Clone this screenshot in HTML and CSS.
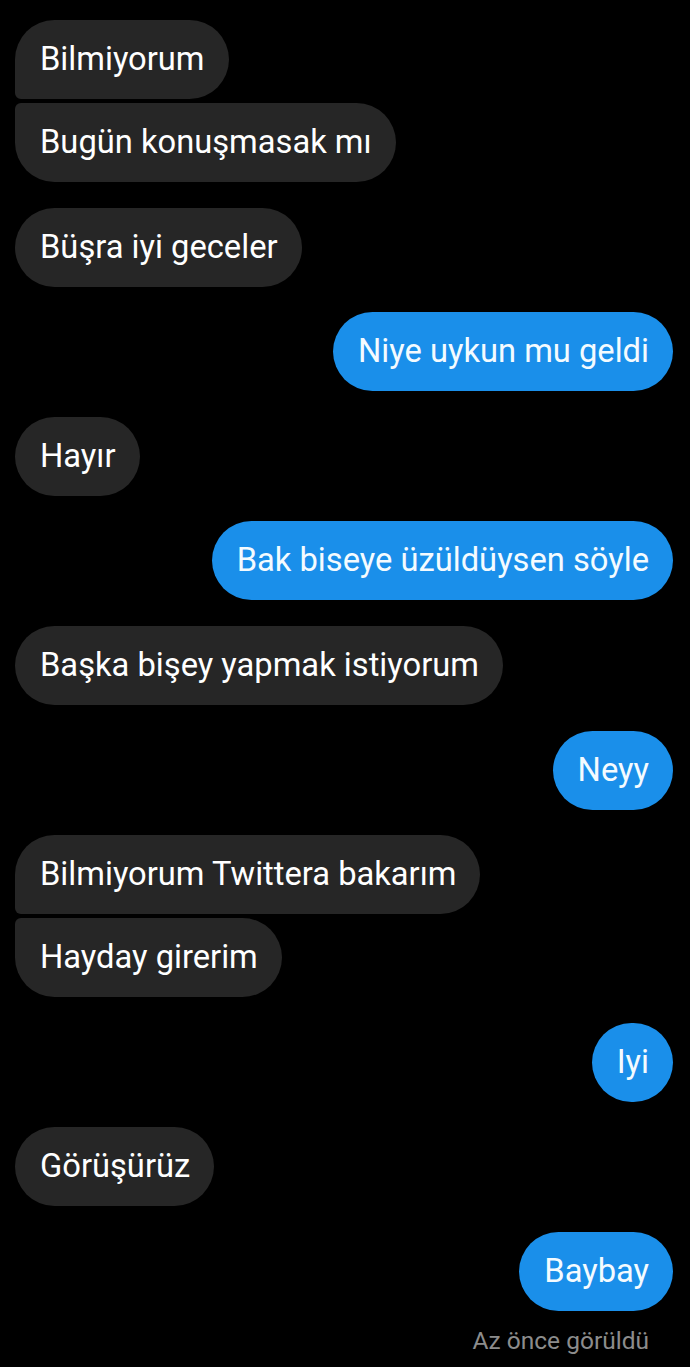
FILE: index.html
```html
<!DOCTYPE html>
<html lang="tr">
<head>
  <meta charset="UTF-8">
  <meta name="viewport" content="width=device-width, initial-scale=1.0">
  <title>Sohbet</title>
  <link rel="stylesheet" href="styles.css">
</head>
<body>
  <div class="chat">
    <!-- Incoming group -->
    <div class="group in">
      <div class="msg">Bilmiyorum</div>
      <div class="msg">Bugün konuşmasak mı</div>
    </div>
    <div class="group in">
      <div class="msg">Büşra iyi geceler</div>
    </div>
    <div class="group out">
      <div class="msg">Niye uykun mu geldi</div>
    </div>
    <div class="group in">
      <div class="msg">Hayır</div>
    </div>
    <div class="group out">
      <div class="msg">Bak biseye üzüldüysen söyle</div>
    </div>
    <div class="group in">
      <div class="msg">Başka bişey yapmak istiyorum</div>
    </div>
    <div class="group out">
      <div class="msg">Neyy</div>
    </div>
    <div class="group in">
      <div class="msg">Bilmiyorum Twittera bakarım</div>
      <div class="msg">Hayday girerim</div>
    </div>
    <div class="group out">
      <div class="msg">Iyi</div>
    </div>
    <div class="group in">
      <div class="msg">Görüşürüz</div>
    </div>
    <div class="group out">
      <div class="msg">Baybay</div>
    </div>
    <div class="seen">Az önce görüldü</div>
  </div>
</body>
</html>
```

FILE: styles.css
```css
/* General Styles */
body {
  margin: 0;
  padding: 0;
  background: #000;
  color: #fff;
  font-family: Roboto, "Noto Sans", Arial, sans-serif;
}

.chat {
  padding: 20px 17px 0 15px;
  display: flex;
  flex-direction: column;
  gap: 25.6px;
}

/* Message groups */
.group {
  display: flex;
  flex-direction: column;
  gap: 4px;
}

.group.in {
  align-items: flex-start;
}

.group.out {
  align-items: flex-end;
}

.msg {
  font-size: 32.7px;
  line-height: 37px;
  padding: 21px 24px 21px 25px;
  border-radius: 40px;
  white-space: nowrap;
}

.group.in .msg {
  background: #262626;
}

.group.out .msg {
  background: #1a8fea;
  color: #f4fbff;
}

/* Stacked corners */
.group.in .msg:not(:last-child) {
  border-bottom-left-radius: 6px;
}

.group.in .msg:not(:first-child) {
  border-top-left-radius: 6px;
}

.group.out .msg:not(:last-child) {
  border-bottom-right-radius: 6px;
}

.group.out .msg:not(:first-child) {
  border-top-right-radius: 6px;
}

.seen {
  margin-top: -10px;
  align-self: flex-end;
  padding-right: 24px;
  font-size: 24.5px;
  line-height: 28px;
  color: #8c8c8c;
}
```
